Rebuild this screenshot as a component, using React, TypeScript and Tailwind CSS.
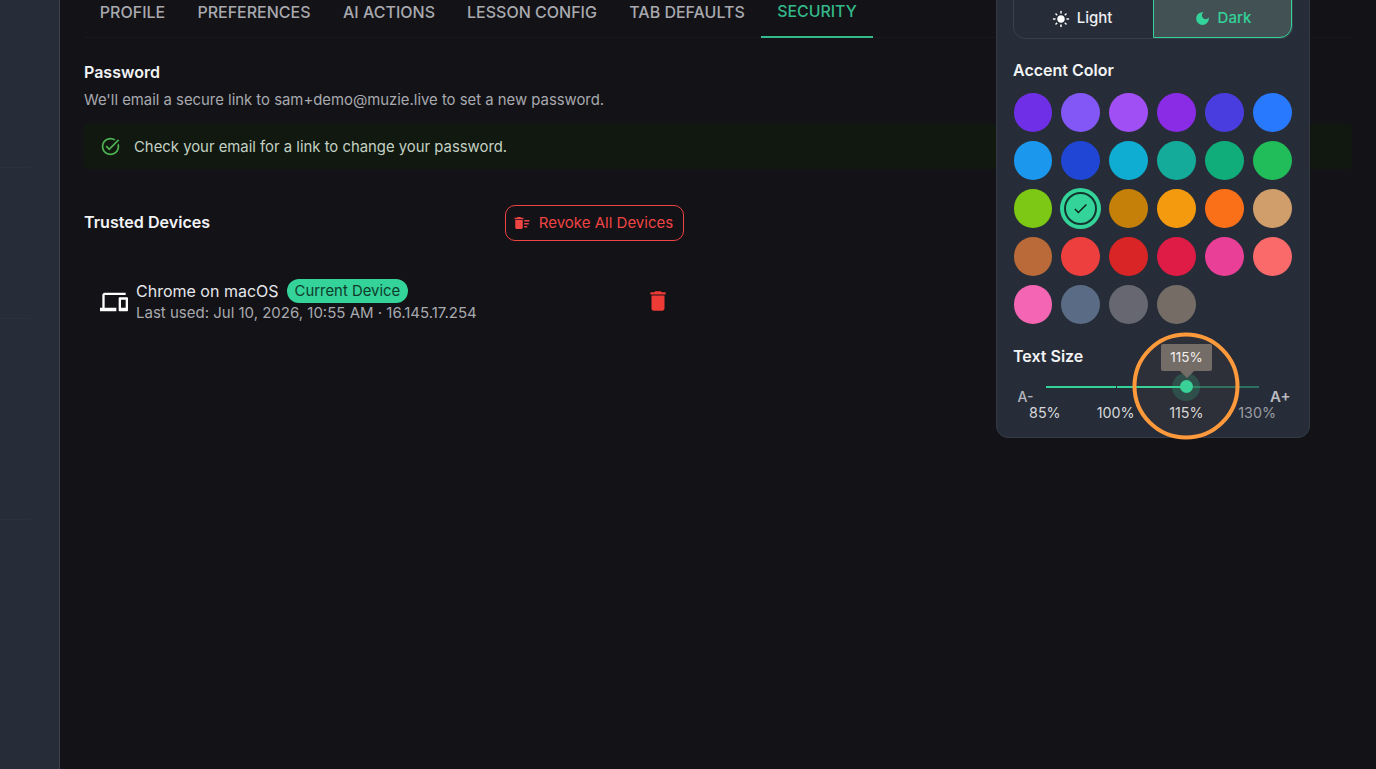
import React from 'react';
import { MdCheck, MdDarkMode, MdDelete, MdDeleteSweep, MdDevices, MdLightMode, MdTaskAlt } from 'react-icons/md';

const tabs = [
  { label: 'PROFILE', width: 'w-[97px]' },
  { label: 'PREFERENCES', width: 'w-[146px]' },
  { label: 'AI ACTIONS', width: 'w-[124px]' },
  { label: 'LESSON CONFIG', width: 'w-[162px]' },
  { label: 'TAB DEFAULTS', width: 'w-[148px]' },
];

const accentColors = [
  '#6f2fe6', '#8257f5', '#a04ff5', '#8a2be6', '#4a3de0', '#2979ff',
  '#1b98ee', '#1f46d4', '#0fadd2', '#14ab9b', '#10ad7a', '#20bd5a',
  '#7cc814', '#34d399', '#c5800a', '#f39a0f', '#f97018', '#cf9e6b',
  '#b96a38', '#ee3f3f', '#d92525', '#de1c46', '#ea3f97', '#fb6a6a',
  '#f465b3', '#5a6b85', '#666771', '#746c65',
];

const sizes = [
  { label: '85%', color: 'text-[#d6d7da]' },
  { label: '100%', color: 'text-[#d6d7da]' },
  { label: '115%', color: 'text-[#d6d7da]' },
  { label: '130%', color: 'text-[#9a9ca3]' },
];

const ThemePopover = () => (
  <div className="absolute left-[996px] top-[-20px] w-[314px] h-[458px] rounded-b-xl bg-[#272d38] border border-[#343a45] pl-[16px] pr-[16px] pt-[5px]">
    <div className="flex h-[53px] w-[280px] rounded-[12px] border border-[#3a404b]">
      <div className="flex w-[139px] items-center justify-center gap-[7px] pr-[3px] pt-[12px] text-[15px] font-medium text-[#eceef0]">
        <MdLightMode size={18} className="text-white" />
        Light
      </div>
      <div className="flex flex-1 items-center justify-center gap-[7px] rounded-r-[12px] border border-[#34d399] bg-[#425254] pt-[12px] text-[15px] font-medium text-[#34d399]">
        <MdDarkMode size={17} />
        Dark
      </div>
    </div>

    <div className="mt-[21px] text-[16px] leading-[20px] font-semibold text-[#f2f3f5]">Accent Color</div>
    <div className="mt-[13px] ml-[0.5px] grid grid-cols-[repeat(6,38.6px)] gap-[9.4px]">
      {accentColors.map((color, index) => (
        <div key={index} className="flex h-[38.6px] w-[38.6px] items-center justify-center">
          {color === '#34d399' ? (
            <div className="flex h-[41px] w-[41px] shrink-0 items-center justify-center rounded-full" style={{ backgroundColor: color }}>
              <div className="flex h-[33px] w-[33px] items-center justify-center rounded-full border-[2px] border-[#14342e]">
                <MdCheck size={17} className="text-[#0d1f1a]" />
              </div>
            </div>
          ) : (
            <div className="h-full w-full rounded-full" style={{ backgroundColor: color }} />
          )}
        </div>
      ))}
    </div>

    <div className="mt-[22px] text-[16px] leading-[20px] font-semibold text-[#f2f3f5]">Text Size</div>

    <div className="relative mt-[14px] ml-[0.5px] h-[48px]">
      <span className="absolute left-[4px] top-[9px] text-[14px] leading-[16px] font-medium text-[#b4b7bd]">A-</span>
      <span className="absolute left-[256.5px] top-[8px] text-[15px] leading-[18px] font-semibold text-[#b9bcc2]">A+</span>
      <div className="absolute left-[32px] top-[6px] flex h-[2px] w-[213px]">
        <div className="h-full w-[70px] bg-[#34d399]" />
        <div className="h-full w-[1px]" />
        <div className="h-full w-[70px] bg-[#34d399]" />
        <div className="h-full flex-1 bg-[#34d399]/40" />
      </div>
      <div className="absolute left-[158.5px] top-[-7px] h-[28px] w-[28px] rounded-full bg-[#34d399]/20" />
      <div className="absolute left-[166px] top-[0.5px] h-[13px] w-[13px] rounded-full bg-[#34d399]" />
      <div className="absolute left-[147.5px] top-[-36px] flex h-[27px] w-[51px] items-center justify-center rounded-[2px] bg-[#706c69] text-[13.5px] text-[#f2f2f2]">
        <div className="absolute bottom-[-5px] left-[20.5px] h-[10px] w-[10px] rotate-45 bg-[#706c69]" />
        <span className="relative">115%</span>
      </div>
      <div className="absolute left-[-4px] top-[24px] grid w-[283px] grid-cols-4 text-center text-[14.3px] leading-[18px]">
        {sizes.map(size => (
          <span key={size.label} className={size.color}>{size.label}</span>
        ))}
      </div>
    </div>
  </div>
);

export default function App() {
  return (
    <div className="relative flex h-[769px] w-[1376px] overflow-hidden bg-[#121217] font-['Inter',sans-serif]">
      <aside className="w-[60px] shrink-0 border-r border-[#3c424d] bg-[#272d38]">
        <div className="mt-[167px] h-px w-[30px] bg-[#2c323d]" />
        <div className="mt-[150px] h-px w-[30px] bg-[#2c323d]" />
        <div className="mt-[200px] h-px w-[30px] bg-[#2c323d]" />
      </aside>

      <main className="w-[1292px] pl-[24px] pr-0">
        <nav className="-mt-[12px] flex h-[50px] w-[1268px] border-b border-[#18181e]">
          {tabs.map(tab => (
            <div key={tab.label} className={`flex h-[48px] items-center justify-center text-[16px] font-medium text-[#a8a9ae] ${tab.width}`}>
              {tab.label}
            </div>
          ))}
          <div className="flex h-[50px] w-[112px] items-start justify-center border-b-[2px] border-[#34b98a] pt-[15px] text-[15.9px] leading-[18px] font-medium text-[#34b98a]">
            SECURITY
          </div>
        </nav>

        <h2 className="mt-[23px] text-[16px] leading-[22px] font-semibold text-[#f2f3f5]">Password</h2>
        <p className="mt-[7px] text-[14.87px] leading-[20px] text-[#a8a9ae]">We'll email a secure link to sam+demo@muzie.live to set a new password.</p>

        <div className="mt-[14px] flex h-[45px] w-[1268px] items-center gap-[13px] rounded bg-[#10180f] pl-[16px] text-[14.87px] text-[#c3d1c4]">
          <MdTaskAlt size={21} className="text-[#4caf50]" />
          <span className="mt-[1px]">Check your email for a link to change your password.</span>
        </div>

        <div className="mt-[36px] flex w-[600px] items-center justify-between">
          <h2 className="-mt-[2px] text-[16.1px] leading-[22px] font-semibold text-[#f2f3f5]">Trusted Devices</h2>
          <button className="flex h-[36px] w-[179px] items-center justify-center gap-[8px] rounded-[10px] border border-[#ef4444] pr-[3px] text-[15px] text-[#ef4444]">
            <MdDeleteSweep size={18} />
            Revoke All Devices
          </button>
        </div>

        <div className="mt-[38px] flex w-[600px] items-center pl-[16px] pr-[13px]">
          <MdDevices size={28} className="mt-[2px] text-white" />
          <div className="ml-[8px] flex-1">
            <div className="flex items-center gap-[9px] leading-[24px]">
              <span className="text-[16px] text-[#e6e7ea]">Chrome on macOS</span>
              <span className="-ml-[1px] -mt-[1px] rounded-full bg-[#34d399] px-[8px] text-[14.9px] leading-[24px] text-[#0f3d2c]">Current Device</span>
            </div>
            <div className="text-[15px] leading-[20px] text-[#a8a9ae]">Last used: Jul 10, 2026, 10:55 AM · 16.145.17.254</div>
          </div>
          <MdDelete size={26} className="text-[#ef3b36]" />
        </div>
      </main>

      <ThemePopover />

      <svg className="absolute left-[1130px] top-[330px] h-[112px] w-[112px]" viewBox="0 0 112 112" fill="none">
        <circle cx="56" cy="56" r="51.5" fill="#ff9a3c" fillOpacity="0.03" stroke="#ff9a3c" strokeWidth="4" />
      </svg>
    </div>
  );
}
